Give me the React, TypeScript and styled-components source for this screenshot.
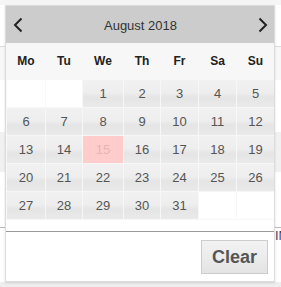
import React from "react"
import styled, { createGlobalStyle } from "styled-components"

const GlobalStyle = createGlobalStyle`
  html, body {
    margin: 0;
    padding: 0;
    background: #fff;
    font-family: "Liberation Sans", Arial, sans-serif;
  }
`

const COLUMNS = "38px 36px 40px 36px 37px 37px 37px"
const WEEKDAYS = ["Mo", "Tu", "We", "Th", "Fr", "Sa", "Su"]
const LEADING_BLANKS = 2
const DAYS_IN_MONTH = 31
const SELECTED_DAY = 15

const buildCells = (): (number | null)[] => {
  const cells: (number | null)[] = []
  for (let i = 0; i < LEADING_BLANKS; i++) cells.push(null)
  for (let d = 1; d <= DAYS_IN_MONTH; d++) cells.push(d)
  while (cells.length % 7 !== 0) cells.push(null)
  return cells
}

const ChevronLeft = () => (
  <svg width="10" height="16" viewBox="0 0 10 16">
    <path d="M8.5 1.5 L2 8 L8.5 14.5" fill="none" stroke="#222" strokeWidth="2" />
  </svg>
)

const ChevronRight = () => (
  <svg width="10" height="16" viewBox="0 0 10 16">
    <path d="M1.5 1.5 L8 8 L1.5 14.5" fill="none" stroke="#222" strokeWidth="2" />
  </svg>
)

export default function App() {
  const cells = buildCells()
  return (
    <>
      <GlobalStyle />
      <Page>
        <Behind>
          <TopStrip />
          <BehindRow $height={41} $line />
          <BehindRow $height={33} $shade="#f7f7f7" />
          <BehindRow $height={52} />
          <BehindRow $height={40} $shade="#f1f1f1" />
          <BehindRow $height={55} />
          <BehindInput>INV</BehindInput>
          <BehindRow $height={38} />
          <BottomStrip />
        </Behind>

        <Popup>
          <Header>
            <NavButton aria-label="previous month">
              <ChevronLeft />
            </NavButton>
            <MonthTitle>August 2018</MonthTitle>
            <NavButton aria-label="next month">
              <ChevronRight />
            </NavButton>
          </Header>

          <Body>
            <WeekdayRow>
              {WEEKDAYS.map(w => (
                <Weekday key={w}>{w}</Weekday>
              ))}
            </WeekdayRow>
            <DayGrid>
              {cells.map((d, i) =>
                d === null ? (
                  <EmptyCell key={i} />
                ) : (
                  <DayCell key={i} $selected={d === SELECTED_DAY}>
                    {d}
                  </DayCell>
                )
              )}
            </DayGrid>
          </Body>

          <Spacer />
          <Footer>
            <ClearButton>Clear</ClearButton>
          </Footer>
        </Popup>
      </Page>
    </>
  )
}

const Page = styled.div`
  position: relative;
  width: 281px;
  height: 287px;
  overflow: hidden;
`

const Behind = styled.div`
  display: flex;
  flex-direction: column;
  width: 100%;
`

const TopStrip = styled.div`
  height: 5px;
  background: #f5f5f5;
`

const BottomStrip = styled.div`
  height: 8px;
  background: #eeeeee;
`

const BehindRow = styled.div<{ $height: number; $shade?: string; $line?: boolean }>`
  height: ${p => p.$height}px;
  background: ${p => p.$shade || "#fff"};
  border-bottom: ${p => (p.$line ? "1px solid #dddddd" : "none")};
`

const BehindInput = styled.div`
  height: 16px;
  margin-top: 0;
  padding-left: 275px;
  border-top: 1px solid #bbbbbb;
  font-size: 13px;
  line-height: 16px;
  color: #3a3a6a;
  white-space: nowrap;
`

const Popup = styled.div`
  position: absolute;
  left: 5px;
  top: 5px;
  width: 268px;
  height: 275px;
  display: flex;
  flex-direction: column;
  background: #fff;
  border: 1px solid #dcdcdc;
  box-shadow: 0 1px 2px rgba(0, 0, 0, 0.12);
`

const Header = styled.div`
  height: 37px;
  display: flex;
  align-items: center;
  justify-content: space-between;
  padding: 0 6px 0 7px;
  background: #cccccc;
`

const NavButton = styled.span`
  display: flex;
  align-items: center;
  cursor: pointer;
`

const MonthTitle = styled.span`
  font-size: 13px;
  color: #333;
  margin-top: 1px;
`

const Body = styled.div`
  background: #f7f7f7;
  padding: 0 0 1px 1px;
`

const WeekdayRow = styled.div`
  display: grid;
  grid-template-columns: ${COLUMNS};
  column-gap: 1px;
  height: 36px;
  align-items: center;
`

const Weekday = styled.span`
  text-align: center;
  font-size: 12px;
  font-weight: bold;
  color: #222;
`

const DayGrid = styled.div`
  display: grid;
  grid-template-columns: ${COLUMNS};
  grid-auto-rows: 27px;
  gap: 1px;
  padding-top: 1px;
`

const EmptyCell = styled.div`
  background: #fff;
`

const DayCell = styled.div<{ $selected?: boolean }>`
  display: flex;
  align-items: center;
  justify-content: center;
  font-size: 13px;
  color: ${p => (p.$selected ? "#e8b4b4" : "#555")};
  background: ${p =>
    p.$selected
      ? "#ffcccc"
      : "linear-gradient(to bottom, #f1f1f1 0%, #eeeeee 45%, #e5e5e5 65%, #eaeaea 100%)"};
  cursor: pointer;
`

const Spacer = styled.div`
  height: 11px;
  border-bottom: 1px solid #9a9a9a;
`

const Footer = styled.div`
  flex: 1;
  display: flex;
  justify-content: flex-end;
  align-items: flex-start;
  padding: 8px 6px 0 0;
`

const ClearButton = styled.button`
  width: 67px;
  height: 34px;
  padding: 0;
  font-family: "Liberation Sans", Arial, sans-serif;
  font-size: 18px;
  font-weight: bold;
  color: #555;
  background: linear-gradient(to bottom, #f2f2f2 0%, #ebebeb 55%, #e3e3e3 100%);
  border: 1px solid #cccccc;
  border-radius: 0;
  cursor: pointer;
`
